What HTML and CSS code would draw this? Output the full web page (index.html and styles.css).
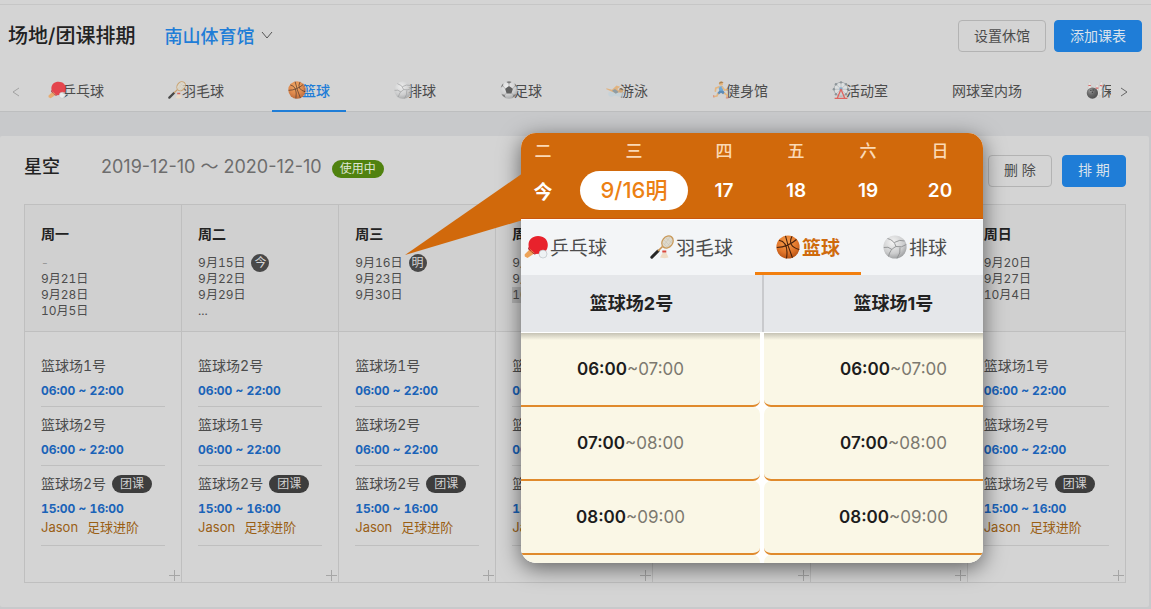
FILE: index.html
```html
<!DOCTYPE html>
<html lang="zh-CN">
<head>
<meta charset="utf-8">
<meta name="viewport" content="width=device-width, initial-scale=1">
<title>场地/团课排期</title>
<link rel="stylesheet" href="styles.css">
</head>
<body>
<svg class="sprite" aria-hidden="true">
  <defs>
    <radialGradient id="g-orange" cx=".45" cy=".3" r=".75"><stop offset="0" stop-color="#f9a04c"/><stop offset=".6" stop-color="#e0752a"/><stop offset="1" stop-color="#b04c12"/></radialGradient>
    <radialGradient id="g-white" cx=".4" cy=".3" r=".8"><stop offset="0" stop-color="#f4f4f4"/><stop offset=".6" stop-color="#cccdce"/><stop offset="1" stop-color="#8f9193"/></radialGradient>
    <radialGradient id="g-dark" cx=".35" cy=".3" r=".8"><stop offset="0" stop-color="#8a8a8a"/><stop offset=".5" stop-color="#4a4a4a"/><stop offset="1" stop-color="#2a2a2a"/></radialGradient>
  </defs>
  <symbol id="i-pingpong" viewBox="0 0 24 24">
    <path d="M6.500 13.500 11 18 3.500 23 .8 21.500 .6 19.500z" fill="#eda358"/>
    <path d="M4.500 10C4.500 4.500 8.500 1 14 1c6 0 9.800 3.800 9.800 9 0 5-3.300 8.500-8.300 8.700l-4 .2-6.700-6z" fill="#e8222c"/>
    <path d="M4.800 12c1 3.500 3.800 6.200 7.500 7l-2 .5L4 14z" fill="#a9121c"/>
    <circle cx="19" cy="19" r="4" fill="#eef2f4" stroke="#b5bcc0" stroke-width=".6"/>
  </symbol>
  <symbol id="i-badminton" viewBox="0 0 24 24">
    <path d="M1.800 22.200 8 16" stroke="#262626" stroke-width="3" stroke-linecap="round"/>
    <path d="M8 16 12.500 11.500" stroke="#c9924f" stroke-width="1.600"/>
    <ellipse cx="17.500" cy="7" rx="5.200" ry="6.500" transform="rotate(38 17.500 7)" fill="#ded9cc" stroke="#c99a5b" stroke-width="1.300"/>
    <path d="m14 5 6 6M16 3l6 5M13 8l4 4M14 10l6-8M17 12l5-7" stroke="#c6c0b0" stroke-width=".5"/>
    <path d="m10 22.500 2.800-5h3.400l2.300 5-4 .8z" fill="#f0dcc4"/>
    <path d="M12.300 15.500h4v2h-4z" fill="#d9473c"/>
  </symbol>
  <symbol id="i-basketball" viewBox="0 0 24 24">
    <circle cx="12" cy="12" r="11.600" fill="url(#g-orange)"/>
    <g fill="none" stroke="#4a220c" stroke-width="1.100"><path d="M9.500 .8Q12 12 16.500 22.700M.8 12.500Q12 12 20.500 4.500M3 5.200Q13 7 10.500 23.300M16 1.200Q11 11 23.300 14.500"/></g>
  </symbol>
  <symbol id="i-volleyball" viewBox="0 0 24 24">
    <circle cx="12" cy="12" r="11.600" fill="url(#g-white)"/>
    <g fill="none" stroke="#8d8f91" stroke-width=".9"><path d="M13 11.500Q11 5 4.500 3.500M13 11.500Q7 14 5.500 21.500M13 11.500Q19 13 23.300 9.500M11.300 7.500Q17 4 21.500 6M17 12.500Q18 18 14 23.300M9 14.500Q5 11 .8 12.500"/></g>
  </symbol>
  <symbol id="i-soccer" viewBox="0 0 24 24">
    <circle cx="12" cy="12" r="11.600" fill="url(#g-white)"/>
    <path d="m12 6.500 5.200 3.800-2 6.200H8.800l-2-6.200z" fill="#444"/>
    <path d="M8.500 1.200 12 3.500l3.500-2.300q-3.500-1.500-7 0zM1 9l3-2.500L4.500 3Q1.500 5.500 1 9zm22 0-3-2.500-.5-3.500Q22.500 5.500 23 9zM2 17.500l4 .8 1.500 4Q4 21 2 17.500zm20 0-4 .8-1.500 4Q20 21 22 17.500z" fill="#666"/>
    <path d="M12 3.500v3M4 6.500l2.800 3.800M20 6.500l-2.800 3.800M6 18.300l2.800-1.800M18 18.300l-2.800-1.800" stroke="#888" stroke-width=".8"/>
  </symbol>
  <symbol id="i-swim" viewBox="0 0 24 24">
    <path d="M3 15.500Q7 13 11 15t7-.5 6 1.500v4q-4 2-8 .5t-7 0-6-2z" fill="#c3d2da"/>
    <path d="M.5 9.500 8 11.500l6-5.500 5 1.500-4 3 4 4.500-6 1L9 14.500.5 11z" fill="#e5ab6b"/>
    <path d="m8 13 4-2.500 5 4-4 2.500z" fill="#7d8f99"/>
    <circle cx="20" cy="12.500" r="3" fill="#cf9c66"/><path d="M17.500 11q2.500-3.500 5.500.5z" fill="#6a5a48"/>
  </symbol>
  <symbol id="i-run" viewBox="0 0 24 24">
    <circle cx="12" cy="3.500" r="2.800" fill="#e9b06d"/><path d="M9 3.500Q11-1 15.500 2l-3 1z" fill="#a8702d"/>
    <path d="m8.500 7.500 5.500-1 1 7-5 1z" fill="#5a9fd6"/>
    <path d="M9 8 5 9.500 4.500 13.500M13.800 8l3 4 4-1" fill="none" stroke="#e9b06d" stroke-width="2.200" stroke-linecap="round"/>
    <path d="M9.800 13h5.500l2 3-2.500 1.500-2.800-2L9 18l-2.500-1.500z" fill="#3d79b0"/>
    <path d="m8 16.500-1.500 3.500-4 .5M16 16l4.500 3-1 3" fill="none" stroke="#e9b06d" stroke-width="2.200"/>
    <path d="m2 19 .5 3M18.500 22.500h3.500" stroke="#d8806b" stroke-width="1.500"/>
  </symbol>
  <symbol id="i-wheel" viewBox="0 0 24 24">
    <circle cx="12" cy="11" r="9.300" fill="#dfe2e3" stroke="#9aa2a6" stroke-width="1.200"/>
    <path d="M12 1.500v19M2.500 11h19M5.300 4.300l13.400 13.400M18.700 4.300 5.300 17.700" stroke="#a8b1b5" stroke-width=".9"/>
    <g fill="#7d878c"><circle cx="12" cy="1.800" r="1.600"/><circle cx="5.300" cy="4.300" r="1.600"/><circle cx="18.700" cy="4.300" r="1.600"/><circle cx="2.500" cy="11" r="1.600"/><circle cx="21.500" cy="11" r="1.600"/><circle cx="5.300" cy="17.700" r="1.600"/><circle cx="18.700" cy="17.700" r="1.600"/></g>
    <circle cx="12" cy="10.500" r="2.200" fill="#6f9cc4"/>
    <path d="m12 11-5 12M12 11l5 12M3.500 23.200h17" fill="none" stroke="#e14a44" stroke-width="1.800"/>
  </symbol>
  <symbol id="i-bowling" viewBox="0 0 24 24">
    <g fill="#e9e7e4" stroke="#b9b7b4" stroke-width=".5"><path d="M3 3q1.800-3 3.500 0v4l2 6H2l1.200-6zM19 1.500q2.500-2 3.500 1l-1 5q1.500 5-1.500 12h-4.500q-1-7 2.500-12zM13 6q1.800-3 3.500 0v4q2.500 6 1 11.500h-5Q10.500 16 13 10z"/></g>
    <path d="M3.200 6h3.200M18.500 6l3.300.5M13 9.500h3.500" stroke="#dd4c4c" stroke-width="1.600"/>
    <circle cx="8.500" cy="16" r="7.500" fill="url(#g-dark)"/>
    <g fill="#181818"><circle cx="6.500" cy="12.500" r=".9"/><circle cx="9.500" cy="12" r=".9"/><circle cx="8.500" cy="15" r=".9"/></g>
  </symbol>
</svg>

<header class="page-head">
  <div class="title-bar">
    <h1 class="title">场地/团课排期</h1>
    <button class="venue" type="button">南山体育馆
      <svg class="chevron" viewBox="0 0 12 12"><path d="M1 3l5 6 5-6"/></svg>
    </button>
    <div class="actions">
      <button class="btn" type="button">设置休馆</button>
      <button class="btn primary" type="button">添加课表</button>
    </div>
  </div>
  <div class="tabs">
    <button class="arrow faint" type="button" aria-label="上一页"><svg viewBox="0 0 10 10"><path d="M8 1 2 5l6 4"/></svg></button>
    <nav class="tab-list">
      <button class="tab" type="button"><svg class="ico"><use href="#i-pingpong"/></svg>乒乓球</button>
      <button class="tab" type="button"><svg class="ico"><use href="#i-badminton"/></svg>羽毛球</button>
      <button class="tab active" type="button"><svg class="ico"><use href="#i-basketball"/></svg>篮球</button>
      <button class="tab" type="button"><svg class="ico"><use href="#i-volleyball"/></svg>排球</button>
      <button class="tab" type="button"><svg class="ico"><use href="#i-soccer"/></svg>足球</button>
      <button class="tab" type="button"><svg class="ico"><use href="#i-swim"/></svg>游泳</button>
      <button class="tab" type="button"><svg class="ico"><use href="#i-run"/></svg>健身馆</button>
      <button class="tab" type="button"><svg class="ico"><use href="#i-wheel"/></svg>活动室</button>
      <button class="tab" type="button">网球室内场</button>
      <button class="tab" type="button"><svg class="ico"><use href="#i-bowling"/></svg>保龄球</button>
    </nav>
    <button class="arrow" type="button" aria-label="下一页"><svg viewBox="0 0 10 10"><path d="m2 1 6 4-6 4"/></svg></button>
  </div>
</header>

<main class="card">
  <div class="plan-head">
    <h2 class="plan-name">星空</h2>
    <span class="plan-range">2019-12-10 ～ 2020-12-10</span>
    <span class="status">使用中</span>
    <div class="plan-actions">
      <button class="btn narrow" type="button">删 除</button>
      <button class="btn primary narrow" type="button">排 期</button>
    </div>
  </div>

  <table class="week">
    <thead>
      <tr>
        <th><h3>周一</h3><p class="none">-</p><p>9月21日</p><p>9月28日</p><p>10月5日</p></th>
        <th><h3>周二</h3><p>9月15日<span class="dot">今</span></p><p>9月22日</p><p>9月29日</p><p>...</p></th>
        <th><h3>周三</h3><p>9月16日<span class="dot">明</span></p><p>9月23日</p><p>9月30日</p></th>
        <th><h3>周四</h3><p>9月17日</p><p>9月24日</p><p><mark>10月1日</mark></p></th>
        <th><h3>周五</h3><p>9月18日</p><p>9月25日</p><p>10月2日</p></th>
        <th><h3>周六</h3><p>9月19日</p><p>9月26日</p><p>10月3日</p></th>
        <th><h3>周日</h3><p>9月20日</p><p>9月27日</p><p>10月4日</p></th>
      </tr>
    </thead>
    <tbody>
      <tr id="slots"></tr>
    </tbody>
  </table>
</main>

<section class="popover" aria-label="预订预览">
  <svg class="pointer" viewBox="0 0 118 82" aria-hidden="true"><path d="M118 0v47L0 82z"/></svg>
  <div class="phone">
    <div class="days">
      <span class="wd first">二</span><span class="wd">三</span><span class="wd">四</span><span class="wd">五</span><span class="wd">六</span><span class="wd">日</span>
      <button class="day first" type="button">今</button><button class="day picked" type="button">9/16明</button><button class="day" type="button">17</button><button class="day" type="button">18</button><button class="day" type="button">19</button><button class="day" type="button">20</button>
    </div>
    <nav class="sports">
      <button class="sport" type="button"><svg class="sport-ico"><use href="#i-pingpong"/></svg>乒乓球</button>
      <button class="sport" type="button"><svg class="sport-ico"><use href="#i-badminton"/></svg>羽毛球</button>
      <button class="sport on" type="button"><svg class="sport-ico"><use href="#i-basketball"/></svg>篮球</button>
      <button class="sport" type="button"><svg class="sport-ico"><use href="#i-volleyball"/></svg>排球</button>
    </nav>
    <div class="courts"><div class="court">篮球场2号</div><div class="court">篮球场1号</div></div>
    <div class="hours">
      <div class="hour"><b>06:00</b>~07:00</div><div class="hour"><b>06:00</b>~07:00</div>
      <div class="hour"><b>07:00</b>~08:00</div><div class="hour"><b>07:00</b>~08:00</div>
      <div class="hour"><b>08:00</b>~09:00</div><div class="hour"><b>08:00</b>~09:00</div>
      <div class="hour next"></div><div class="hour next"></div>
    </div>
  </div>
</section>
<script src="schedule.js"></script>
</body>
</html>
```

FILE: schedule.js
```js
// First two courts of each weekday; the class slot is the same every day.
const days = [["1", "2"], ["2", "1"], ["1", "2"], ["1", "2"], ["1", "2"], ["1", "2"], ["1", "2"]];

const slot = (court) =>
  `<li class="slot"><div class="slot-name">篮球场${court}号</div><div class="slot-time">06:00 ~ 22:00</div></li>`;

document.getElementById("slots").innerHTML = days.map((courts) => `
  <td><ul class="slot-list">${courts.map(slot).join("")}
    <li class="slot">
      <div class="slot-name">篮球场2号<span class="tag">团课</span></div>
      <div class="slot-time">15:00 ~ 16:00</div>
      <div class="coach"><span>Jason</span><span>足球进阶</span></div>
    </li></ul>
    <button class="add" type="button" aria-label="添加"><svg viewBox="0 0 11 11"><path d="M5.5 0v11M0 5.5h11"/></svg></button>
  </td>`).join("");
```

FILE: styles.css
```css
* { box-sizing: border-box; }
body, h1, h2, h3, p, ul { margin: 0; padding: 0; }
body {
  position: relative;
  background: #c8c9cb;
  color: #4c4c4c;
  font-family: Inter, "Noto Sans CJK SC", sans-serif;
  font-size: 14px;
  font-variant-numeric: tabular-nums;
  overflow-x: hidden;
}
button {
  margin: 0;
  padding: 0;
  border: 0;
  background: none;
  color: inherit;
  font: inherit;
  white-space: nowrap;
}
.sprite { position: absolute; width: 0; height: 0; }

.page-head {
  border-top: 4px solid #d4d4d4;
  border-bottom: 1px solid #bdbebf;
  background: #d4d4d4;
}
.title-bar {
  display: flex;
  align-items: center;
  padding: 15px 9px 0 8px;
  border-top: 1px solid #c6c6c6;
}
.title { color: #222; font-size: 20px; font-weight: 500; line-height: 30px; }
.venue {
  display: flex;
  align-items: center;
  gap: 7px;
  margin-left: 29px;
  padding-bottom: 2px;
  color: #1f7dd7;
  font-size: 18px;
  font-weight: 500;
}
.chevron { width: 12px; height: 12px; fill: none; stroke: #555; }
.actions, .plan-actions { display: flex; gap: 8px; margin-left: auto; }
.plan-actions { gap: 10px; }
.btn {
  width: 88px;
  height: 32px;
  padding-bottom: 2px;
  border: 1px solid #b3b3b3;
  border-radius: 4px;
}
.btn.primary { border-color: #1f7dd7; background: #1f7dd7; color: #d9e2ec; }
.btn.narrow { width: 64px; }

.tabs { display: flex; align-items: stretch; height: 60px; margin-bottom: -1px; padding-top: 18px; }
.arrow { width: 32px; flex: none; color: #666; }
.arrow.faint { color: #a2a2a2; }
.arrow svg { width: 10px; height: 10px; fill: none; stroke: currentColor; }
.tab-list { display: flex; flex: 1; gap: 32px; overflow: hidden; }
.arrow:last-child { width: 40px; padding-right: 14px; }
.tab {
  display: flex;
  flex: none;
  align-items: center;
  padding: 0 16px 1px;
  border-bottom: 2px solid transparent;
}
.tab.active { border-color: #1f7dd7; color: #1f7dd7; font-weight: 500; }
.ico { width: 18px; height: 18px; margin-right: -4px; opacity: .8; }

.card {
  margin: 24px 2px 2px 0;
  padding: 19px 23px 24px 24px;
  border-radius: 2px;
  background: #d4d4d4;
}
.plan-head { display: flex; align-items: flex-start; height: 32px; margin-bottom: 17px; line-height: 24px; }
.plan-name { color: #222; font-size: 18px; font-weight: 500; }
.plan-range { margin: 0 10px 0 41px; color: #6d6d6d; font-size: 18px; font-variant-numeric: normal; }
.status {
  margin-top: 5px;
  padding: 0 8px;
  border-radius: 9px;
  background: #50820f;
  color: #dde5d3;
  font-size: 12px;
  line-height: 18px;
}

.week { width: 100%; border-collapse: collapse; table-layout: fixed; }
.week th, .week td { border: 1px solid #bfbfbf; vertical-align: top; text-align: left; font-weight: 400; }
.week th { height: 127px; padding: 18px 16px 12px; background: #d0d0d0; }
.week th:not(:last-child) { width: 14.27%; }
.week h3 { margin-bottom: 10px; color: #222; font-size: 14px; font-weight: 700; line-height: 22px; }
.week p { display: flex; align-items: center; gap: 6px; height: 16px; font-size: 12px; line-height: 16px; }
.week .none { color: #999; }
.week mark { background: #b4b4b4; color: inherit; }
.dot {
  width: 18px;
  height: 18px;
  border-radius: 50%;
  background: #484848;
  color: #d4d4d4;
  line-height: 18px;
  text-align: center;
}
.week td { padding: 0; }
.slot-list { padding: 16px 16px 0; list-style: none; }
.slot { padding: 7px 0; border-bottom: 1px solid #bfbfbf; }
.slot-name { display: flex; align-items: center; gap: 6px; height: 20px; margin-bottom: 8px; }
.slot-time { color: #1a63b8; font-size: 12px; font-weight: 700; line-height: 16px; }
.tag {
  margin-top: 2px;
  padding: 0 8px;
  border-radius: 9px;
  background: #3d3d3d;
  color: #d0d0d0;
  font-size: 12px;
  line-height: 18px;
}
.coach { display: flex; gap: 9px; color: #9a5f14; font-size: 13px; line-height: 21px; }
.add { display: block; width: 11px; height: 11px; margin: 24px 1px 1px auto; }
.add svg { display: block; width: 11px; height: 11px; stroke: #a6a6a6; }

.popover {
  position: absolute;
  top: 133px;
  left: 521px;
  width: 462px;
  border-radius: 15px;
  box-shadow: 0 5px 22px rgba(0, 0, 0, .55);
}
.pointer { position: absolute; top: 40px; left: -116px; width: 118px; height: 82px; fill: #d1690b; }
.phone { position: relative; overflow: hidden; border-radius: 15px; background: #fff; }
.days {
  display: grid;
  grid-template-columns: 59px 108px repeat(4, 72px);
  align-items: center;
  justify-items: center;
  padding: 4px 0 8px;
  border-bottom: 1px solid #c9560f;
  background: #d1690b;
  color: #fff;
}
.days .first { justify-self: start; width: 44px; text-align: center; }
.wd { color: #fbd9b5; font-size: 17px; font-weight: 500; line-height: 28px; }
.day { height: 39px; margin-top: 6px; font-size: 19px; font-weight: 600; font-variant-numeric: normal; }
.day.picked {
  width: 108px;
  padding-bottom: 5px;
  border-radius: 20px;
  background: #fff;
  color: #ec8013;
  font-size: 22px;
  font-weight: 500;
}
.sports {
  display: flex;
  gap: 43px;
  height: 56px;
  padding: 0 3px;
  border-top: 1px solid #fff;
  background: #f3f5f7;
}
.sport { position: relative; display: flex; align-items: center; gap: 2px; padding-bottom: 2px; font-size: 19px; }
.sport-ico { width: 24px; height: 24px; }
.sport.on { color: #cf6a0c; font-weight: 700; }
.sport.on::after {
  position: absolute;
  right: -21px;
  bottom: 0;
  left: -21px;
  height: 3px;
  background: #f27f0e;
  content: "";
}
/* Both court columns are scrolled sideways under the left edge. */
.courts, .hours { display: grid; grid-template-columns: 1fr 1fr; column-gap: 4px; margin: 0 -40px 0 -20px; }
.courts { column-gap: 0; background: #e5e7ea; border-bottom: 1px solid #fff; }
.court { color: #222; font-size: 18px; font-weight: 700; font-variant-numeric: normal; line-height: 57px; text-align: center; }
.court + .court { border-left: 2px solid #c9cacd; }
.hour {
  height: 74px;
  border-bottom: 2px solid #e08a2c;
  border-radius: 7px;
  background: #faf7e6;
  color: #7c7970;
  font-size: 17px;
  font-variant-numeric: normal;
  line-height: 72px;
  text-align: center;
}
.hour:nth-child(-n+2) { background: linear-gradient(#c5c2b4, #faf7e6 7px); border-radius: 0 0 7px 7px; }
.hour b { color: #1c1c1c; font-weight: 600; }
.hour.next { height: 8px; border-bottom: 0; border-radius: 7px 7px 0 0; }
```
